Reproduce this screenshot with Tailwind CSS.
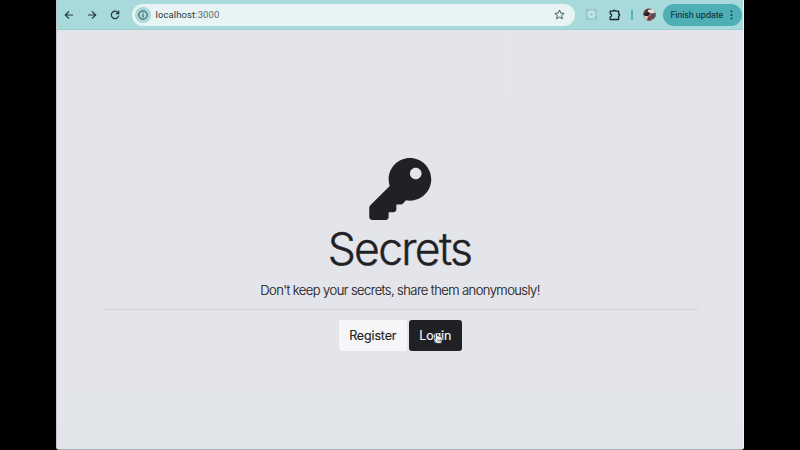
<!DOCTYPE html>
<html lang="en">
<head>
<meta charset="utf-8">
<title>Secrets</title>
<script src="https://cdn.jsdelivr.net/npm/@tailwindcss/browser@4"></script>
</head>
<body class="h-[450px] w-[800px] overflow-hidden bg-black pl-14 font-['Inter',sans-serif] text-[#1f2125]">
<div class="flex h-[450px] w-[688px] flex-col overflow-hidden rounded-b-[3px] border-r border-b border-l border-r-[#f5f6f7] border-b-[#aaadb0] border-l-[#c5c8cb] bg-linear-to-b from-[#e4e5ea] from-80% to-[#e1e5ea]">
  <header class="flex h-[30px] shrink-0 items-center border-b border-[#9ccfd1] bg-[#a9dadb]">
    <nav class="flex w-[75px] items-center gap-[13px] pl-[7px]">
      <svg class="size-[10px]" viewBox="0 0 10 10" fill="none" stroke="#20393c" stroke-width="1.2"><path d="M9 5H1.5M5 1.3L1.3 5L5 8.7"/></svg>
      <svg class="size-[10px]" viewBox="0 0 10 10" fill="none" stroke="#20393c" stroke-width="1.2"><path d="M1 5h7.5M5 1.3L8.7 5L5 8.7"/></svg>
      <svg class="size-[10px]" viewBox="0 0 10 10" fill="none" stroke="#20393c" stroke-width="1.2"><path d="M8.7 5.5A3.7 3.7 0 1 1 7.7 2.3L8.6 3.3M8.7 .8V3.6H5.8"/></svg>
    </nav>
    <div class="flex h-[22px] w-[443px] items-center rounded-full bg-[#e8f3f4] pr-[10px] pl-[3px]">
      <span class="flex size-4 items-center justify-center rounded-full bg-[#a9dadb]">
        <svg class="size-[10px]" viewBox="0 0 10 10" fill="none" stroke="#24484b" stroke-width="1"><circle cx="5" cy="5" r="4.2"/><path d="M5 4.3V7.4M5 2.5V3.5"/></svg>
      </span>
      <span class="ml-[4.5px] grow font-['Roboto',sans-serif] text-[9.5px] leading-none tracking-[0.1px] text-[#26383b]">localhost<span class="text-[#566b6e]">:3000</span></span>
      <svg class="size-[11px]" viewBox="0 0 11 11" fill="none" stroke="#30484b" stroke-width=".9" stroke-linejoin="round"><path d="M5.5 1L6.8 4.1L10.1 4.4L7.6 6.6L8.4 9.8L5.5 8.1L2.6 9.8L3.4 6.6L.9 4.4L4.2 4.1Z"/></svg>
    </div>
    <svg class="ml-[11px] size-[11px]" viewBox="0 0 11 11" fill="none" stroke="#e0f4f5" stroke-width=".7"><rect x=".5" y=".5" width="10" height="10" fill="#94c7ca" stroke="#8cc0c3" stroke-width=".5"/><ellipse cx="5.5" cy="5.5" rx="4.3" ry="1.8"/><ellipse cx="5.5" cy="5.5" rx="4.3" ry="1.8" transform="rotate(60 5.5 5.5)"/><ellipse cx="5.5" cy="5.5" rx="4.3" ry="1.8" transform="rotate(120 5.5 5.5)"/></svg>
    <svg class="ml-[12px] size-[12px]" viewBox="0 0 12 12" fill="none" stroke="#17272a" stroke-width="1.3" stroke-linejoin="round"><path d="M1.2 2.2H4.2A1 1 0 0 1 6.2 2.2H9.6V5A1.1 1.1 0 0 1 9.6 7.2V10.5H1.2V7.8A1.5 1.5 0 0 0 1.2 4.8Z"/></svg>
    <span class="ml-[10px] h-[10px] w-[1.5px] bg-[#57b6bc]"></span>
    <svg class="ml-[10px] size-[13px]" viewBox="0 0 13 13"><clipPath id="avatar"><circle cx="6.5" cy="6.5" r="6.3"/></clipPath><g clip-path="url(#avatar)"><path fill="#8f8181" d="M0 0h13v13H0z"/><path fill="#5c3c3f" d="M0 2L4 0L8 2L6 5L0 7Z"/><path fill="#e6dfe0" d="M5 2L11 1L12 5L8 5L5 4Z"/><path fill="#281b23" d="M1 6L5 4L7 6L5 8L2 8Z"/><path fill="#d9c2c0" d="M1 8L4 8L6 9L5 11L2 12Z"/><path fill="#55505a" d="M8 6L13 5V9L10 11L7 9Z"/><path fill="#7b3a3c" d="M5 9L7 8L9 10L7 13H4Z"/></g></svg>
    <div class="ml-[7px] flex h-[22px] w-[79px] shrink-0 items-center rounded-full bg-[#4eafb5] pl-[8px]">
      <span class="w-[56px] pt-px text-[8.5px] leading-none font-medium tracking-[-0.15px] whitespace-nowrap text-[#12383c]">Finish update</span>
      <svg class="ml-[2px] h-[10px] w-[5px]" viewBox="0 0 5 10" fill="#12383c"><circle cx="2.5" cy="1.4" r=".95"/><circle cx="2.5" cy="5" r=".95"/><circle cx="2.5" cy="8.6" r=".95"/></svg>
    </div>
  </header>
  <main class="flex flex-col items-center pt-32">
    <svg class="h-[62px] w-[63px]" viewBox="-2 0 520 512" fill="#1f2125"><path d="M512 176.001C512 273.203 433.202 352 336 352c-11.22 0-22.19-1.062-32.827-3.069l-24.012 27.014A23.999 23.999 0 0 1 261.223 384H224v40c0 13.255-10.745 24-24 24h-40v40c0 13.255-10.745 24-24 24H24c-13.255 0-24-10.745-24-24v-78.059c0-6.365 2.529-12.47 7.029-16.971l161.802-161.802C163.108 213.814 160 195.271 160 176 160 78.798 238.797.001 335.999 0 433.488-.001 512 78.511 512 176.001zM336 128c0 26.51 21.49 48 48 48s48-21.49 48-48-21.49-48-48-48-48 21.49-48 48z"/></svg>
    <h1 class="mt-[2px] mr-px h-[54px] text-[44.5px] leading-[54px] font-light tracking-[-1.7px] whitespace-nowrap [-webkit-text-stroke:0.4px_#1f2125]">Secrets</h1>
    <p class="mt-[4px] h-5 text-[13px] leading-5 font-light tracking-[-0.57px] whitespace-nowrap [-webkit-text-stroke:0.15px_#1f2125]">Don't keep your secrets, share them anonymously!</p>
    <hr class="mt-[9px] w-[595px] border-t border-[#d3d4d9]">
    <div class="mt-[10px] flex gap-[2px]">
      <button class="h-[31px] w-[68.5px] rounded-[3px] bg-[#f6f6f9] pt-[2px] text-[12.5px] leading-none tracking-[-0.15px] [-webkit-text-stroke:0.15px_#1f2125]">Register</button>
      <button class="relative h-[31px] w-[52.5px] rounded-[3px] bg-[#1f2125] pt-[2px] text-[12.5px] leading-none tracking-[-0.15px] text-[#f5f5f7] [-webkit-text-stroke:0.15px_#f5f5f7]">Login
        <svg class="absolute top-[12px] left-[24px] h-[12px] w-[10px]" viewBox="0 0 10 12" fill="#fff" stroke="#1f2125" stroke-width=".6" stroke-linejoin="round"><path d="M2.3 1.2Q3.2.3 4 1.3L4.7 4.2Q5.8 3.6 6.3 4.6Q7.3 4.2 7.7 5.1Q8.8 4.9 9 6V8.5L8.2 11.3H3.8L1.1 8Q.2 6.7 1 6.3Q1.8 6 2.8 7.1Z"/><path d="M4.9 7.4V9.5M6.2 7.4V9.5M7.5 7.4V9.5"/></svg>
      </button>
    </div>
  </main>
</div>
</body>
</html>
